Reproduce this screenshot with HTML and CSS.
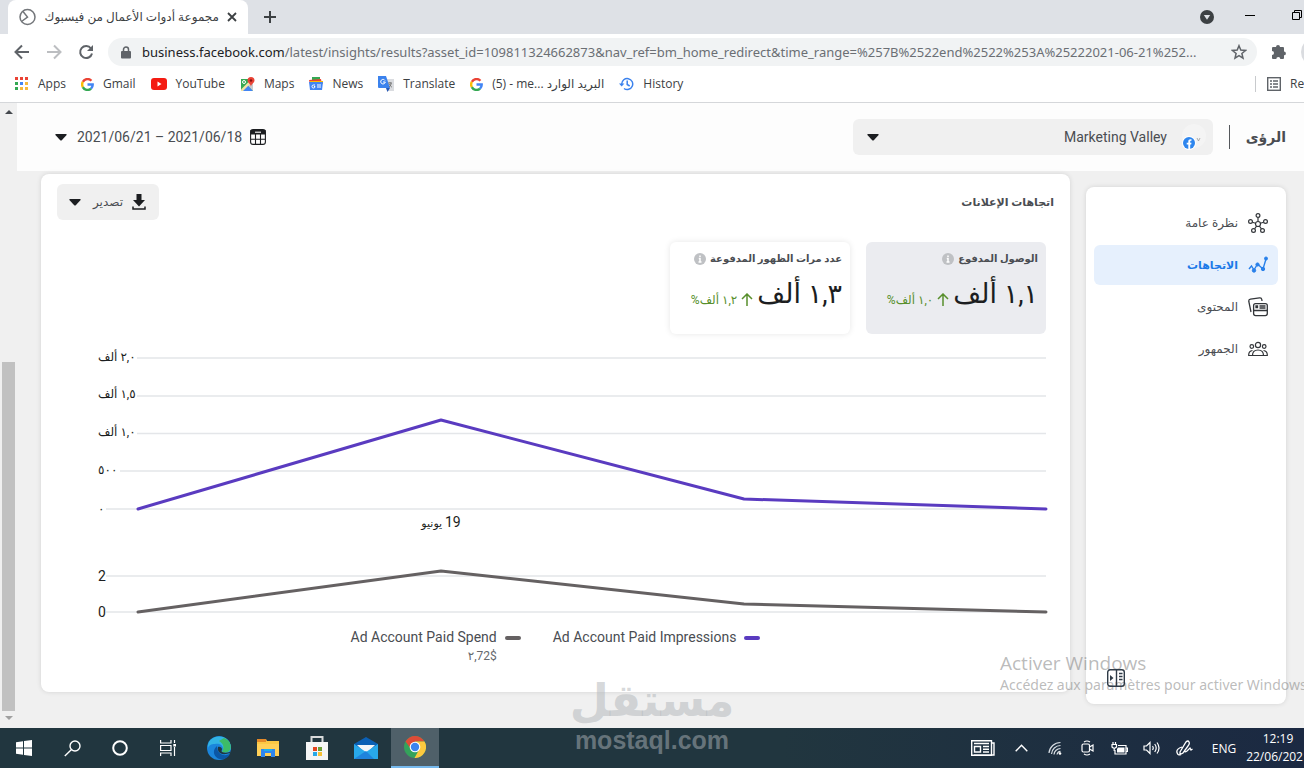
FILE: index.html
```html
<!DOCTYPE html>
<html lang="ar">
<head>
<meta charset="utf-8">
<title>مجموعة أدوات الأعمال من فيسبوك</title>
<link rel="stylesheet" href="styles.css">
</head>
<body>
<div class="screen">
  <header class="browser">
    <div class="tabstrip">
      <div class="tab">
        <svg class="tab-icon" width="18" height="18" viewBox="0 0 18 18" fill="none" stroke="#73767a" stroke-width="1.500"><circle cx="8.500" cy="9" r="7.500"/><path d="M4 3.500L8.500 9L2.500 13.500"/></svg>
        <span class="tab-title" dir="rtl">مجموعة أدوات الأعمال من فيسبوك</span>
        <button class="plain" aria-label="Close tab"><svg width="10" height="10" viewBox="0 0 10 10" stroke="#3c4043" stroke-width="1.8"><path d="M1 1l8 8M9 1L1 9"/></svg></button>
      </div>
      <button class="plain new-tab" aria-label="New tab"><svg width="12" height="12" viewBox="0 0 12 12" stroke="#3c4043" stroke-width="2"><path d="M6 0v12M0 6h12"/></svg></button>
      <div class="window-controls">
        <button class="plain" aria-label="Search tabs"><svg width="14" height="14" viewBox="0 0 14 14"><circle cx="7" cy="7" r="7" fill="#3c4043"/><path d="M3.800 5h6.400L7 9.800z" fill="#dee1e6"/></svg></button>
        <button class="plain" aria-label="Minimize"><svg width="10" height="10" viewBox="0 0 10 10"><path d="M0 3.500h10" stroke="#000"/></svg></button>
        <button class="plain" aria-label="Restore"><svg width="12" height="14" viewBox="0 0 12 14" fill="none" stroke="#000"><path d="M.5 2.500h7v7h-7zM2.500 2.500v-2h7v7h-2"/></svg></button>
      </div>
    </div>
    <div class="toolbar">
      <nav class="nav-buttons">
        <button class="plain" aria-label="Back"><svg width="16" height="16" viewBox="0 0 16 16" fill="none" stroke="#5f6368" stroke-width="2"><path d="M15 8H2M8 1.500L1.500 8L8 14.500"/></svg></button>
        <button class="plain" aria-label="Forward"><svg width="16" height="16" viewBox="0 0 16 16" fill="none" stroke="#bcbec1" stroke-width="2"><path d="M1 8h13M8 1.500L14.500 8L8 14.500"/></svg></button>
        <button class="plain" aria-label="Reload"><svg width="16" height="16" viewBox="0 0 16 16"><path d="M13 4.500A6 6 0 1 0 14 9.500" fill="none" stroke="#5f6368" stroke-width="2"/><path d="M15 1v6H9z" fill="#5f6368"/></svg></button>
      </nav>
      <div class="omnibox">
        <svg width="10" height="13" viewBox="0 0 10 13"><path d="M2.500 6V3.500a2.500 2.500 0 0 1 5 0V6" fill="none" stroke="#5f6368" stroke-width="1.500"/><rect y="5" width="10" height="7.500" rx="1" fill="#5f6368"/></svg>
        <span class="url"><b>business.facebook.com</b>/latest/insights/results?asset_id=109811324662873&amp;nav_ref=bm_home_redirect&amp;time_range=%257B%2522end%2522%253A%25222021-06-21%252...</span>
        <button class="plain" aria-label="Bookmark"><svg width="16" height="16" viewBox="0 0 16 16"><path d="M8 1.700l1.800 4.400 4.700.4-3.600 3 1.100 4.600L8 11.700l-4 2.400 1.100-4.600-3.600-3 4.700-.4z" fill="none" stroke="#5f6368" stroke-width="1.500"/></svg></button>
      </div>
      <button class="plain puzzle" aria-label="Extensions"><svg width="16" height="16" viewBox="0 0 16 16"><path d="M5 3a2 2 0 0 1 4 0h3a1 1 0 0 1 1 1v3.500a1.900 1.900 0 0 1 0 3.800V14a1 1 0 0 1-1 1H9.300a2 2 0 0 0-4 0H2a1 1 0 0 1-1-1v-3a2 2 0 0 0 0-4V4a1 1 0 0 1 1-1z" fill="#5f6368"/></svg></button>
      <span class="profile"></span>
    </div>
    <nav class="bookmarks">
      <a href="#"><svg width="14" height="14" viewBox="0 0 14 14"><path d="M0 0h3v3H0zM5 0h3v3H5zM10 0h3v3h-3z" fill="#ea4335"/><path d="M0 5h3v3H0zM0 10h3v3H0z" fill="#34a853"/><path d="M5 5h3v3H5z" fill="#4285f4"/><path d="M10 5h3v3h-3zM5 10h3v3H5zM10 10h3v3h-3z" fill="#f6b93b"/></svg>Apps</a>
      <a href="#"><svg width="13" height="13" viewBox="0 0 14 14" fill="none" stroke-width="2.600"><path d="M2 4.200A5.600 5.600 0 0 1 11.200 3" stroke="#ea4335"/><path d="M2 4.200a5.600 5.600 0 0 0 0 5.600" stroke="#fbbc05"/><path d="M2 9.800a5.600 5.600 0 0 0 8.800 1.600" stroke="#34a853"/><path d="M10.800 11.400A5.600 5.600 0 0 0 12.600 7H7" stroke="#4285f4"/></svg>Gmail</a>
      <a href="#"><svg width="16" height="12" viewBox="0 0 16 12"><rect width="16" height="12" rx="3" fill="#f41b12"/><path d="M6.500 3.500v5l4-2.500z" fill="#fff"/></svg>YouTube</a>
      <a href="#"><svg width="15" height="15" viewBox="0 0 15 15"><path d="M1 2h12v12H1z" fill="#34a853"/><path d="M1 14L7.500 8l5.500 6z" fill="#4285f4"/><path d="M13 3v11L7.500 8z" fill="#c9ccd0"/><path d="M1 12.500L11.500 2 13 4 3 14H1z" fill="#f1e3a5"/><path d="M11 0a3.500 3.500 0 0 1 3.500 3.500C14.500 6 11 7 11 10 11 7 7.500 6 7.500 3.500A3.500 3.500 0 0 1 11 0z" fill="#ea4335"/><circle cx="11" cy="3.500" r="1.200" fill="#811"/><circle cx="4" cy="5" r="1.500" fill="none" stroke="#fff"/></svg>Maps</a>
      <a href="#"><svg width="14" height="14" viewBox="0 0 14 14"><path d="M3 0h8v5H3z" fill="#34a853"/><path d="M0 3l12-1 1 5H1z" fill="#ea4335"/><path d="M1 4h13v3H1z" fill="#fbbc05"/><path d="M0 5h14l-1 8H1z" fill="#4285f4"/><path d="M6 8H4.500a1.500 1.500 0 1 0 1.500 1.500H5M8 8h4M8 10h4" stroke="#fff" fill="none"/></svg>News</a>
      <a href="#"><svg width="16" height="16" viewBox="0 0 16 16"><path d="M6 3h10v12H9z" fill="#dadce0"/><path d="M0 0h8l4 12H1a1 1 0 0 1-1-1z" fill="#3b82ed"/><path d="M8 12h4l-2.500 4z" fill="#2457b5"/><path d="M7 4.500A2.300 2.300 0 1 0 7.300 6H5" stroke="#fff" fill="none"/><path d="M10 7h4M12 6v1M11 11c2-1 2-3 2-4M11.500 8c.5 2 2 3 2.500 3" stroke="#777" fill="none"/></svg>Translate</a>
      <a href="#"><svg width="13" height="13" viewBox="0 0 14 14" fill="none" stroke-width="2.600"><path d="M2 4.200A5.600 5.600 0 0 1 11.200 3" stroke="#ea4335"/><path d="M2 4.200a5.600 5.600 0 0 0 0 5.600" stroke="#fbbc05"/><path d="M2 9.800a5.600 5.600 0 0 0 8.800 1.600" stroke="#34a853"/><path d="M10.800 11.400A5.600 5.600 0 0 0 12.600 7H7" stroke="#4285f4"/></svg><span class="mixed">(5) - me... <bdi>البريد الوارد</bdi></span></a>
      <a href="#"><svg width="15" height="14" viewBox="0 0 15 14" fill="none" stroke="#3b82ed" stroke-width="1.500"><path d="M2.700 7A5.500 5.500 0 1 1 5 11.500M8.200 3.500v4l2.500 1.500"/><path d="M0 6.500h5.400L2.700 9.500z" fill="#3b82ed" stroke="none"/></svg>History</a>
      <a href="#" class="reading"><svg width="14" height="14" viewBox="0 0 14 14" fill="none" stroke="#5f6368"><rect x=".7" y=".7" width="12.600" height="12.600" stroke-width="1.400"/><path d="M3 4h2M6 4h5M3 7h2M6 7h5M3 10h2M6 10h5" stroke-width="1.400"/></svg>Reading list</a>
    </nav>
  </header>

  <div class="viewport">
    <div class="scrollbar">
      <svg width="8" height="5" viewBox="0 0 8 5"><path d="M0 5l4-4 4 4z" fill="#44484d"/></svg>
      <span class="thumb"></span>
      <svg width="8" height="5" viewBox="0 0 8 5"><path d="M0 0l4 4 4-4z" fill="#a0a0a0"/></svg>
    </div>
    <div class="app" dir="rtl">
      <header class="app-header">
        <h1>الرؤى</h1>
        <span class="divider"></span>
        <button class="account">
          <svg width="26" height="26" viewBox="0 0 26 26"><circle cx="14" cy="12" r="12" fill="#f4f4f4"/><path d="M17 14l1.500 3 1.500-3" fill="none" stroke="#999" stroke-width=".8"/><circle cx="9" cy="19" r="7" fill="#fff"/><circle cx="9" cy="19" r="6" fill="#2e86ee"/><path d="M8.300 25v-4.400H6.700v-1.900h1.600v-1.300c0-1.700 1-2.500 3.200-2.200v1.600c-1-.1-1.300.2-1.300.9v1h1.300l-.3 1.900h-1V25z" fill="#fff"/></svg>
          <span>Marketing Valley</span>
          <svg class="caret" width="12" height="7" viewBox="0 0 12 7"><path d="M1 0h10q1 0 .6 1L7 6q-1 1-2 0L.4 1Q0 0 1 0z"/></svg>
        </button>
        <button class="plain dates">
          <svg width="16" height="16" viewBox="0 0 16 16" fill="none" stroke="#1c1e21" stroke-width="1.100"><rect x=".6" y=".6" width="14.800" height="14.800" rx="2.500"/><path d="M1 1.500h14v3.500H1z" fill="#1c1e21"/><path d="M5.500 5v10M10.500 5v10M1 10.200h14"/><path d="M5 3.200h6" stroke="#fff"/></svg>
          <span dir="ltr">2021/06/21 – 2021/06/18</span>
          <svg class="caret" width="12" height="7" viewBox="0 0 12 7"><path d="M1 0h10q1 0 .6 1L7 6q-1 1-2 0L.4 1Q0 0 1 0z"/></svg>
        </button>
      </header>
      <div class="columns">
        <nav class="side card">
          <a href="#"><svg width="20" height="20" viewBox="0 0 20 20" fill="none" stroke="#33363a" stroke-width="1.200"><circle cx="10" cy="11" r="2.500"/><circle cx="10" cy="2.500" r="1.900"/><circle cx="2.500" cy="8.500" r="1.900"/><circle cx="17.500" cy="8.500" r="1.900"/><circle cx="5.500" cy="17.500" r="1.900"/><circle cx="14.500" cy="17.500" r="1.900"/><path d="M10 4.500v4M4.400 9.200l3.200 1M15.600 9.200l-3.200 1M6.600 15.900l2-2.900M13.400 15.900l-2-2.900"/></svg>نظرة عامة</a>
          <a href="#" class="current"><svg width="20" height="20" viewBox="0 0 20 20" fill="#2880ea" stroke="#2880ea"><path d="M1 14l2.500-3L6 15l3.500-6 5.500 5 3-10" fill="none" stroke-width="1.400"/><circle cx="6" cy="15.500" r="1.700"/><circle cx="9.500" cy="9.500" r="1.600"/><circle cx="15" cy="14" r="1.700"/><circle cx="18" cy="3.500" r="1.500"/></svg>الاتجاهات</a>
          <a href="#"><svg width="20" height="20" viewBox="0 0 20 20" fill="none" stroke="#33363a" stroke-width="1.300"><rect x="5.600" y="6.600" width="13.700" height="12" rx="2"/><path d="M5.600 13.500h13.700M11.500 9h6M11.500 11h6M3 15L.8 4.500Q.5 2.500 2.500 2.200L11.500.9q2-.3 2.300 1.600l.2 1.500"/><path d="M8 9h1.500v1.500H8z" fill="#33363a"/></svg>المحتوى</a>
          <a href="#"><svg width="20" height="20" viewBox="0 0 20 20" fill="none" stroke="#33363a" stroke-width="1.200"><circle cx="10" cy="6" r="2.600"/><circle cx="3.800" cy="7.500" r="1.800"/><circle cx="16.200" cy="7.500" r="1.800"/><path d="M4.500 16.500Q4.500 11 10 11t5.500 5.500zM4.500 16.500H.7Q.5 12 4.500 11.500M15.500 16.500h3.800Q19.500 12 15.500 11.500"/></svg>الجمهور</a>
        </nav>
        <main class="card report">
          <div class="report-head">
            <h2>اتجاهات الإعلانات</h2>
            <button class="export">
              <svg width="14" height="16" viewBox="0 0 14 16" fill="#1c1e21"><path d="M4.500 0h5v6H13L7 12.500 1 6h3.500z"/><path d="M1 12.500V15h12v-2.500" fill="none" stroke="#1c1e21" stroke-width="1.500"/></svg>
              <span>تصدير</span>
              <svg class="caret" width="12" height="7" viewBox="0 0 12 7"><path d="M1 0h10q1 0 .6 1L7 6q-1 1-2 0L.4 1Q0 0 1 0z"/></svg>
            </button>
          </div>
          <div class="metrics">
            <section class="metric selected">
              <h3>الوصول المدفوع <svg width="12" height="12" viewBox="0 0 12 12"><circle cx="6" cy="6" r="6" fill="#bfc1c4"/><path d="M6 2.500v1.500M4.800 5.500H6v3M4.500 9h3" stroke="#fff" stroke-width="1.500" fill="none"/></svg></h3>
              <p><strong>١,١ ألف</strong><svg width="12" height="13" viewBox="0 0 12 13" fill="none" stroke="#588f2c" stroke-width="1.500"><path d="M6 13V1M1 6l5-5 5 5"/></svg><em>١,٠ ألف%</em></p>
            </section>
            <section class="metric">
              <h3>عدد مرات الظهور المدفوعة <svg width="12" height="12" viewBox="0 0 12 12"><circle cx="6" cy="6" r="6" fill="#bfc1c4"/><path d="M6 2.500v1.500M4.800 5.500H6v3M4.500 9h3" stroke="#fff" stroke-width="1.500" fill="none"/></svg></h3>
              <p><strong>١,٣ ألف</strong><svg width="12" height="13" viewBox="0 0 12 13" fill="none" stroke="#588f2c" stroke-width="1.500"><path d="M6 13V1M1 6l5-5 5 5"/></svg><em>١,٢ ألف%</em></p>
            </section>
          </div>
          <svg class="chart" viewBox="0 0 1029 280" direction="rtl">
            <g stroke="#e4e6e9" stroke-width="1.500">
              <path d="M96 16H1005M96 54H1005M96 91.500H1005M79 129H1005M65 167H1005M65 234H1005M65 270H1005"/>
            </g>
            <g class="axis" text-anchor="end">
              <text x="57" y="19">٢,٠ ألف</text>
              <text x="57" y="56">١,٥ ألف</text>
              <text x="57" y="94">١,٠ ألف</text>
              <text x="57" y="132">٥٠٠</text>
              <text x="57" y="171">٠</text>
              <text class="latin" x="57" y="239">2</text>
              <text class="latin" x="57" y="275">0</text>
            </g>
            <text class="axis day" x="400" y="185" text-anchor="middle"><tspan class="latin">19</tspan> يونيو</text>
            <g fill="none" stroke-width="3" stroke-linecap="round" stroke-linejoin="round">
              <path stroke="#5a3bc0" d="M97 167L400 78L703 157L1005 167"/>
              <path stroke="#656162" d="M97 270L400 229L703 262L1005 270"/>
            </g>
          </svg>
          <div class="legend">
            <div class="key"><i class="violet"></i><span>Ad Account Paid Impressions</span></div>
            <div class="key"><i class="grey"></i><span>Ad Account Paid Spend<small><bdo dir="ltr">٢,72$</bdo></small></span></div>
          </div>
        </main>
      </div>
    </div>
    <div class="activate">
      <p class="activate-title">Activer Windows</p>
      <p class="activate-text">Accédez aux paramètres pour activer Windows.</p>
    </div>
    <button class="plain collapse" aria-label="Collapse"><svg width="18" height="18" viewBox="0 0 18 18" fill="none" stroke="#2f3b47" stroke-width="1.400"><rect x=".7" y=".7" width="16.600" height="16.600" rx="2.500"/><path d="M9.500 1v16M12 4.500h3.500M12 7.500h3.500M12 10.500h3.500"/><path d="M3 6l3.500 3L3 12z" fill="#2f3b47" stroke="none"/></svg></button>
  </div>

  <footer class="taskbar">
    <div class="system">
      <button class="plain task" aria-label="Start"><svg width="16" height="16" viewBox="0 0 16 16" fill="#fff"><path d="M0 2.200L7 1.200V7.600H0zM8 1L16 0V7.600H8zM0 8.500h7v6.300L0 13.800zM8 8.500h8V16L8 15z"/></svg></button>
      <button class="plain task" aria-label="Search"><svg width="17" height="17" viewBox="0 0 17 17" fill="none" stroke="#fff" stroke-width="1.400"><circle cx="11" cy="6" r="5"/><path d="M7.500 9.500L.8 16"/></svg></button>
      <button class="plain task" aria-label="Cortana"><svg width="16" height="16" viewBox="0 0 16 16"><circle cx="8" cy="8" r="6.800" fill="none" stroke="#fff" stroke-width="2"/></svg></button>
      <button class="plain task" aria-label="Task view"><svg width="16" height="16" viewBox="0 0 16 16" fill="none" stroke="#fff" stroke-width="1.200"><path d="M.6 0v3h10.400V0M.6 16v-3h10.400v3M.6 5.500h10.400v5H.6zM14.500 0v3M14.500 7v9"/><path d="M13.300 4h2.700v2.500h-2.700z" fill="#fff" stroke="none"/></svg></button>
    </div>
    <div class="pinned">
      <button class="plain task" aria-label="Edge"><svg width="24" height="24" viewBox="0 0 24 24"><circle cx="12" cy="12" r="12" fill="#1b86dc"/><path d="M1 9C3-2 22-3 24 11c0 5-5 7-9 5 3-6-2-9-7-8-4 0-6 1-7 4z" fill="#32b4e4"/><path d="M17 2c6 2 8 8 6 12-2 3-6 3-8 2 3-5 1-9-3-11z" fill="#3dbb68"/><path d="M10 10c-7 6-1 15 7 13 3-1 5-3 6-5-7 3-13 0-13-8z" fill="#0b57a5"/><path d="M11 11c-1 4 2 8 8 7l4-1v-1c-3 1-6 1-8 0-1-1 0-2 0-3s-2-3-4-2z" fill="#21363f"/></svg></button>
      <button class="plain task" aria-label="File Explorer"><svg width="22" height="20" viewBox="0 0 22 20"><path d="M0 1h9l1 2h12v15H0z" fill="#fbc844"/><path d="M0 1h9v3H0z" fill="#e48a29"/><path d="M0 6h22v12H0z" fill="#ffd058"/><path d="M4 11h14v8h-4v-4H8v4H4z" fill="#2e86ee"/><path d="M7 11h8v2H7z" fill="#19b0ee"/></svg></button>
      <button class="plain task" aria-label="Store"><svg width="24" height="24" viewBox="0 0 24 24"><path d="M6.500 7V1h11v6" fill="none" stroke="#d8dadb" stroke-width="2"/><path d="M1 6h22v18H1z" fill="#f5f5f5"/><path d="M8 11h4v4H8z" fill="#e5451f"/><path d="M13 11h4v4h-4z" fill="#6d9e38"/><path d="M8 16h4v4H8z" fill="#27a8e8"/><path d="M13 16h4v4h-4z" fill="#f8c033"/></svg></button>
      <button class="plain task" aria-label="Mail"><svg width="24" height="22" viewBox="0 0 24 22"><path d="M0 7L12 0l12 7v6H0z" fill="#0b60b5"/><path d="M3 8h18l-7 7h-4z" fill="#f4f6f8"/><path d="M0 7l12 8 12-8v15H0z" fill="#28a8ea"/><path d="M0 22l12-8 8 8z" fill="#1f83dc"/></svg></button>
      <button class="plain task active" aria-label="Chrome"><svg width="22" height="22" viewBox="0 0 22 22"><circle cx="11" cy="11" r="11" fill="#34a25b"/><path d="M1.500 5.500A11 11 0 0 1 20.500 5.500H11L7 13z" fill="#df4b37"/><path d="M20.500 5.500A11 11 0 0 1 10.500 22L16 12 11 5.500z" fill="#fdc93f"/><circle cx="11" cy="11" r="5.300" fill="#fff"/><circle cx="11" cy="11" r="4.200" fill="#3c84ee"/></svg></button>
    </div>
    <div class="tray">
      <button class="plain wide" aria-label="News"><svg width="24" height="16" viewBox="0 0 24 16" fill="none" stroke="#fff" stroke-width="1.400"><path d="M20.500 3H23v12H3M.7.700h19.800v14.600H.7z"/><path d="M3 3.500h15M3.500 6.500h6v5.500h-6zM12 6.500h6M12 9.200h6M12 12h6"/></svg></button>
      <button class="plain mid" aria-label="Show hidden icons"><svg width="13" height="8" viewBox="0 0 13 8" fill="none" stroke="#fff" stroke-width="1.400"><path d="M.7 7.200L6.500 1.200l5.800 6"/></svg></button>
      <button class="plain" aria-label="Wi-Fi"><svg width="14" height="14" viewBox="0 0 14 14" fill="none" stroke="#d8dee3" stroke-width="1.200"><path d="M1 12A11.500 11.500 0 0 1 12.500 1.500M3.500 13A9 9 0 0 1 12.500 4.500M6 13.500A6.500 6.500 0 0 1 12.500 7.500M9 13.500A4 4 0 0 1 12.500 10.300"/><circle cx="12" cy="12.500" r="1.300" fill="#fff" stroke="none"/></svg></button>
      <button class="plain" aria-label="Meet now"><svg width="13" height="16" viewBox="0 0 13 16" fill="none" stroke="#fff" stroke-width="1.200"><rect x="1" y="4" width="7.500" height="8" rx="1.500"/><path d="M8.500 7l3.500-2v6l-3.500-2M3 2Q6 0 9 2M3 14q3 2 6 0"/></svg></button>
      <button class="plain" aria-label="Battery"><svg width="17" height="13" viewBox="0 0 17 13" fill="none" stroke="#fff" stroke-width="1.200"><path d="M7 3.500h8v8.500H4V8M15 6h1.500v3.500H15"/><path d="M7 5.500h6.500v5H6V7z" fill="#fff" stroke="none"/><path d="M1 2.500h4.500V5q-2.200 2.500-4.500 0zM2 0v2M4.500 0v2M3.200 6v3"/></svg></button>
      <button class="plain" aria-label="Volume"><svg width="17" height="14" viewBox="0 0 17 14" fill="none" stroke="#fff" stroke-width="1.200"><path d="M1 5h2.500L7 1.500v11L3.500 9H1zM9.500 5q1.500 2 0 4M11.700 3q3 4 0 8M14 1.500q4 5.500 0 11"/></svg></button>
      <button class="plain mid" aria-label="Ink workspace"><svg width="17" height="16" viewBox="0 0 17 16" fill="none" stroke="#fff" stroke-width="1.300"><path d="M4 12L10 2q2-2 3 0t-1 4L7 13l-3 1.500zM6 7Q0 9 1 12.500t4 2M9 10q-1 3 2 1l3-3 1 2 1.500-1"/></svg></button>
      <button class="plain language">ENG</button>
      <div class="clock"><span>12:19</span><span>22/06/2021</span></div>
    </div>
  </footer>
  <div class="watermark"><span class="mark-ar" dir="rtl">مستقل</span><span class="mark-latin">mostaql.com</span></div>
</div>
</body>
</html>
```
FILE: styles.css
```css
* { box-sizing: border-box; }
body { margin: 0; font-family: "Open Sans", "Noto Sans", "DejaVu Sans", sans-serif; color: #3c4043; overflow: hidden; }
h1, h2, h3, p { margin: 0; }
svg { flex: none; display: block; }
button { font: inherit; color: inherit; border: 0; }
a { color: inherit; text-decoration: none; }
.plain { background: none; padding: 0; display: flex; align-items: center; justify-content: center; }
.screen { position: relative; display: flex; flex-direction: column; height: 100vh; overflow: hidden; }

.browser { flex: none; background: #fff; border-bottom: 1px solid #d5d7da; }
.tabstrip { display: flex; align-items: center; height: 34px; padding-left: 8px; background: #dee1e6; }
.tab { display: flex; align-items: center; width: 240px; height: 34px; padding: 0 11px; background: #fff; border-radius: 8px 8px 0 0; }
.tab-title { flex: 1; margin: 0 8px 0 4px; font-size: 12px; line-height: 16px; white-space: nowrap; }
.new-tab { margin-left: 16px; }
.window-controls { display: flex; align-items: center; gap: 31px; margin-left: auto; }
.window-controls .plain:last-child { margin-left: 6px; }
.toolbar { display: flex; align-items: center; height: 36px; padding-left: 14px; overflow: hidden; }
.nav-buttons { display: flex; gap: 16px; }
.omnibox { flex: 1; min-width: 0; display: flex; align-items: center; gap: 11px; height: 28px; margin-left: 14px; padding: 0 10px 0 13px; border-radius: 14px; background: #f1f3f4; }
.url { flex: 1; min-width: 0; white-space: nowrap; overflow: hidden; font-family: "Noto Sans", sans-serif; font-size: 13px; line-height: 20px; color: #6b6f74; }
.url b { font-weight: 400; color: #202124; }
.puzzle { margin: 0 14px; }
.profile { width: 28px; height: 28px; margin-right: -25px; border-radius: 50%; background: #dadce0; }
.bookmarks { display: flex; align-items: center; height: 32px; padding: 0 0 4px 15px; gap: 15px; font-size: 12px; line-height: 16px; white-space: nowrap; }
.bookmarks a { display: flex; align-items: center; gap: 9px; }
.bookmarks .reading { width: 49px; margin-left: auto; padding-left: 11px; border-left: 1px solid #c8cacd; overflow: hidden; }

.viewport { position: relative; flex: 1; min-height: 0; display: flex; background: #f0f0f0; }
.scrollbar { width: 17px; flex: none; display: flex; flex-direction: column; align-items: center; justify-content: space-between; padding: 6px 0 7px; background: #f0f0f0; }
.thumb { width: 13px; height: 349px; margin: auto 0 5px; background: #c1c1c1; }
.app { flex: 1; min-width: 0; font-family: Roboto, "DejaVu Sans", sans-serif; font-size: 14px; color: #4a4d52; }
.app-header { display: flex; align-items: center; height: 68px; padding: 0 18px 0 38px; background: #fdfdfd; }
.app-header h1 { width: 40px; font-size: 14px; line-height: 24px; white-space: nowrap; }
.divider { width: 1px; height: 24px; margin: 0 16px; background: #55585c; }
.caret { fill: #1c1e21; }
.account { display: flex; align-items: center; gap: 13px; width: 360px; height: 36px; padding: 0 7px 0 14px; border-radius: 6px; background: #f0f0f0; }
.account .caret { margin-right: auto; }
.dates { gap: 8px; margin-right: auto; }
.dates .caret { margin-right: 2px; }
.columns { display: flex; align-items: flex-start; gap: 16px; padding: 3px 18px 0 24px; }
.card { background: #fff; border-radius: 8px; box-shadow: 0 0 5px rgba(0, 0, 0, .12); }
.side { width: 200px; min-height: 517px; flex: none; display: flex; flex-direction: column; gap: 2px; margin-top: 13px; padding: 16px 8px; }
.side a { display: flex; align-items: center; gap: 10px; height: 40px; padding: 0 10px; border-radius: 6px; font-size: 12px; }
.side .current { background: #e6f0fd; color: #1c7ae8; font-size: 11px; font-weight: 700; }
.report { flex: 1; min-width: 0; min-height: 518px; }
.report-head { display: flex; align-items: center; justify-content: space-between; padding: 10px 16px 0; }
.report-head h2 { font-size: 11px; }
.export { display: flex; align-items: center; gap: 9px; width: 102px; height: 36px; padding: 0 13px; border-radius: 6px; background: #f0f0f0; font-size: 12px; }
.export .caret { margin-right: 3px; }
.metrics { display: flex; gap: 16px; padding: 22px 24px 8px; }
.metric { width: 180px; height: 92px; padding: 8px; border-radius: 6px; box-shadow: 0 0 6px rgba(0, 0, 0, .1); white-space: nowrap; }
.metric.selected { background: #ebecf0; box-shadow: none; }
.metric h3 { display: flex; align-items: center; gap: 4px; font-size: 10px; line-height: 18px; }
.metric p { display: flex; align-items: flex-end; gap: 4px; margin-top: 8px; }
.metric p svg { margin-bottom: 6px; }
.metric strong { font-size: 27px; line-height: 36px; font-weight: 400; color: #1c1e21; }
.metric em { margin-bottom: 3px; font-style: normal; font-size: 12px; line-height: 18px; color: #588f2c; }
.chart { width: 100%; height: auto; }
.axis { font-size: 12px; fill: #1c1e21; }
.latin { font-size: 14px; }
.day { font-size: 11px; }
.legend { display: flex; justify-content: center; gap: 32px; padding-top: 7px; }
.key { display: flex; gap: 8px; line-height: 16px; }
.key i { width: 16px; height: 4px; margin-top: 7px; border-radius: 2px; }
.violet { background: #5a3bc0; }
.grey { background: #656162; }
.key small { display: block; margin-top: 3px; font-size: 12px; text-align: right; color: #65686c; }
.activate { position: absolute; top: 548px; left: calc(100% - 304px); white-space: nowrap; color: rgba(130, 130, 130, .55); }
.activate-title { font-size: 19px; line-height: 24px; }
.activate-text { font-family: "Noto Sans", sans-serif; font-size: 14px; line-height: 20px; }
.collapse { position: absolute; top: 566px; right: 179px; }

.taskbar { flex: none; display: flex; height: 40px; color: #fff; background: linear-gradient(90deg, #21363f, #21363f 60%, #1b2942); }
.system { display: flex; }
.pinned { display: flex; gap: 1px; margin-left: 3px; }
.task { width: 48px; height: 40px; }
.active { background: #4f6069; border-bottom: 2px solid #76b9ed; }
.tray { display: flex; margin-left: auto; font-size: 12px; }
.tray .plain { width: 32px; }
.tray .mid { width: 35px; }
.tray .wide { width: 42px; }
.tray .language { width: 44px; }
.clock { display: flex; flex-direction: column; justify-content: center; align-items: center; width: 64px; margin-right: -6px; line-height: 18px; }
.watermark { position: absolute; left: calc(50% - 80px); bottom: 15px; width: 160px; display: flex; flex-direction: column; align-items: center; color: rgba(150, 158, 164, .6); pointer-events: none; font-weight: 700; }
.mark-ar { font-family: "DejaVu Sans", sans-serif; font-size: 45px; line-height: 52px; color: rgba(180, 185, 188, .55); }
.mark-latin { font-family: "Liberation Sans", sans-serif; font-size: 25px; line-height: 26px; }
```
